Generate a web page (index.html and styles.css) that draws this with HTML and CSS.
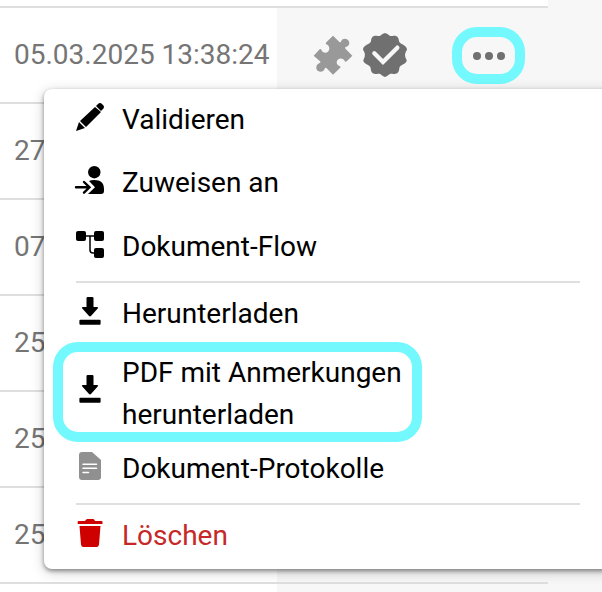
FILE: index.html
```html
<!DOCTYPE html>
<html lang="de">
<head>
<meta charset="utf-8">
<title>Dokumente</title>
<link rel="stylesheet" href="styles.css">
</head>
<body>
<main class="screen">
  <section class="table">
    <div class="row lead"><div class="date"></div></div>
    <div class="row">
      <div class="date">05.03.2025 13:38:24</div>
      <div class="actions">
        <svg class="puzzle" viewBox="0 0 120 120"><path d="M60 2 L77 19Q81 24 84 20C86 8 102 9 107 17C112 27 106 34 98 36Q94 38 98 42L118 62L102 78Q97 83 95 78C92 68 78 68 73 76C68 84 74 92 80 93Q85 96 81 99L60 119L41 100Q37 96 35 101C33 111 18 113 12 105C7 96 12 87 20 84Q25 82 21 79L2 62L18 45Q22 40 25 44C28 53 38 56 45 50C53 43 48 30 40 28Q36 26 40 22Z"/></svg>
        <svg class="verified" viewBox="0 0 132 132"><path class="seal" d="M66 0C77 3 77 10 88 9C102 6 107 13 108 25C110 34 132 36 132 50C125 61 124 68 131 81C132 94 111 94 109 105C108 120 101 125 88 122C77 121 77 128 66 132C55 128 55 121 44 122C31 125 24 120 23 105C21 94 0 94 1 81C8 68 7 61 0 50C0 36 22 34 24 25C25 13 30 6 44 9C55 10 55 3 66 0Z"/><path class="check" d="M34 61L60 87L103 44"/></svg>
        <span class="more"><i></i><i></i><i></i></span>
      </div>
    </div>
    <div class="row"><div class="date">27.02.2025</div></div>
    <div class="row"><div class="date">07.02.2025</div></div>
    <div class="row"><div class="date">25.01.2025</div></div>
    <div class="row"><div class="date">25.01.2025</div></div>
    <div class="row"><div class="date">25.01.2025</div></div>
    <div class="row tail"><div class="date"></div></div>
  </section>
  <nav class="menu">
    <a class="item first"><svg class="icon" viewBox="0 0 28 28"><path d="M0 28L3 19L9 25ZM4 18L19 4L25 9L10 24ZM20 3L22 1Q24-1 26 1L27 2Q29 4 27 6L25 8Z"/></svg><span>Validieren</span></a>
    <a class="item"><svg class="icon" viewBox="0 0 28 28"><circle cx="18.3" cy="6.2" r="6.2"/><path d="M13 15Q15 14 18 14C25 14 28 17 28 23V25Q28 28 25 28H12L19 21.2Z"/><path class="stroke" d="M0 21.3H13M8 16L13.5 21.3L8 26.7"/></svg><span>Zuweisen an</span></a>
    <a class="item"><svg class="icon" viewBox="0 0 28 28"><rect y="1" width="10" height="10" rx="2"/><rect x="18" y="1" width="10" height="10" rx="2"/><rect x="18" y="18" width="10" height="10" rx="2"/><path class="wire" d="M9 6H19M14 6V20Q14 23 17 23H19"/></svg><span>Dokument-Flow</span></a>
    <hr>
    <a class="item"><svg class="icon" viewBox="0 0 28 28"><path d="M11.7 0H16.3Q17.5 0 17.5 1.2V10H21Q23 10 21.7 11.5L15.2 18.8Q14 20.2 12.8 18.8L6.3 11.5Q5 10 7 10H10.5V1.2Q10.5 0 11.7 0Z"/><rect x="3.4" y="22.7" width="21.2" height="5" rx="1"/></svg><span>Herunterladen</span></a>
    <a class="item double"><svg class="icon" viewBox="0 0 28 28"><path d="M11.7 0H16.3Q17.5 0 17.5 1.2V10H21Q23 10 21.7 11.5L15.2 18.8Q14 20.2 12.8 18.8L6.3 11.5Q5 10 7 10H10.5V1.2Q10.5 0 11.7 0Z"/><rect x="3.4" y="22.7" width="21.2" height="5" rx="1"/></svg><span>PDF mit Anmerkungen<br>herunterladen</span></a>
    <a class="item"><svg class="icon gray" viewBox="0 0 28 28"><path d="M6 0H16L25 8V25Q25 28 22 28H6Q3 28 3 25V3Q3 0 6 0Z"/><path class="lines" d="M7 12.3H20.5M7 16.3H20.5M7 20.6H12.5"/></svg><span>Dokument-Protokolle</span></a>
    <hr>
    <a class="item delete"><svg class="icon" viewBox="0 0 28 28"><path d="M2.5 2H9Q10 0 11.5 0H17Q18.5 0 19 2H25.5Q26.5 2 26.5 3V5H1.7V3Q1.7 2 2.5 2ZM3.5 7H24.5L23 25.5Q22.7 28 20.5 28H7.5Q5.3 28 5 25.5Z"/></svg><span>Löschen</span></a>
  </nav>
</main>
</body>
</html>
```
FILE: styles.css
```css
* { box-sizing: border-box; }
body { margin: 0; }
.screen {
  position: relative;
  width: 602px;
  height: 592px;
  overflow: hidden;
  background: #f7f7f7;
  font: 28px/42px Roboto, sans-serif;
}
.table { width: 548px; }
.row {
  display: flex;
  height: 96px;
  border-bottom: 2px solid #dfdfdf;
}
.lead { height: 8px; background: #fff; }
.tail { border: 0; }
.date {
  width: 277px;
  padding: 26px 0 0 14px;
  background: #fff;
  color: #757575;
  white-space: nowrap;
}
.lead .date { padding: 0; }
.actions { display: flex; align-items: flex-start; }
.puzzle { width: 40px; height: 40px; margin: 27px 0 0 36px; fill: #999; }
.verified { width: 44px; height: 44px; margin: 25px 0 0 10px; }
.seal { fill: #707070; }
.check { fill: none; stroke: #f7f7f7; stroke-width: 13; stroke-linecap: round; }
.more {
  display: flex;
  align-items: center;
  justify-content: center;
  gap: 4px;
  width: 73px;
  height: 57px;
  margin: 19px 0 0 45px;
  border: 10px solid #73f9fd;
  border-radius: 25px;
}
.more i { width: 8px; height: 8px; border-radius: 50%; background: #707070; }
.menu {
  position: absolute;
  top: 89px;
  left: 44px;
  display: flex;
  flex-direction: column;
  width: 580px;
  height: 480px;
  padding-left: 32px;
  border-radius: 8px;
  background: #fff;
  box-shadow: 0 2px 4px rgba(0,0,0,.4), 0 3px 14px rgba(0,0,0,.2);
}
.item {
  display: flex;
  align-items: flex-start;
  gap: 18px;
  height: 64px;
  padding-top: 10px;
  color: #000;
}
.first { height: 63px; }
.icon { width: 28px; height: 28px; margin-top: 4px; flex: none; overflow: visible; }
.menu hr { width: 504px; height: 2px; margin: 1px 0 0; border: 0; background: #dfdfdf; }
.stroke { fill: none; stroke: #000; stroke-width: 2.4; stroke-linecap: round; }
.wire { fill: none; stroke: #000; stroke-width: 1.5; }
.double {
  width: 369px;
  height: 100px;
  margin: -5px 0 -4px -23px;
  padding: 0 0 0 13px;
  border: 10px solid #73f9fd;
  border-radius: 25px;
}
.double .icon { margin-top: 23px; }
.gray { fill: #909090; }
.lines { fill: none; stroke: #fff; stroke-width: 1.5; stroke-linecap: round; }
.delete { color: #c62828; }
.delete .icon { fill: #ce0000; }
```
